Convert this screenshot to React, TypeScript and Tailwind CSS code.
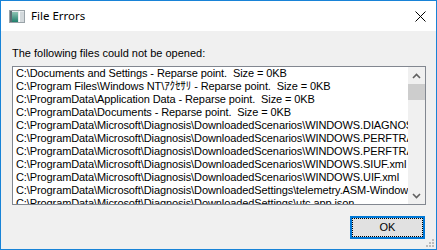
const rows = [
  "C:\\Documents and Settings - Reparse point.  Size = 0KB",
  "C:\\Program Files\\Windows NT\\ｱｸｾｻﾘ - Reparse point.  Size = 0KB",
  "C:\\ProgramData\\Application Data - Reparse point.  Size = 0KB",
  "C:\\ProgramData\\Documents - Reparse point.  Size = 0KB",
  "C:\\ProgramData\\Microsoft\\Diagnosis\\DownloadedScenarios\\WINDOWS.DIAGNOSTICS.xml",
  "C:\\ProgramData\\Microsoft\\Diagnosis\\DownloadedScenarios\\WINDOWS.PERFTRACK.xml",
  "C:\\ProgramData\\Microsoft\\Diagnosis\\DownloadedScenarios\\WINDOWS.PERFTRACK2.xml",
  "C:\\ProgramData\\Microsoft\\Diagnosis\\DownloadedScenarios\\WINDOWS.SIUF.xml",
  "C:\\ProgramData\\Microsoft\\Diagnosis\\DownloadedScenarios\\WINDOWS.UIF.xml",
  "C:\\ProgramData\\Microsoft\\Diagnosis\\DownloadedSettings\\telemetry.ASM-WindowsDefault.json",
  "C:\\ProgramData\\Microsoft\\Diagnosis\\DownloadedSettings\\utc.app.json",
];

function AppIcon() {
  return (
    <svg width="16" height="13" viewBox="0 0 16 13">
      <rect x="0.5" y="0.5" width="15" height="12" fill="#e8ecee" stroke="#9aa3a8" />
      <rect x="1" y="1" width="2" height="11" fill="#5d6d73" />
      <defs>
        <linearGradient id="g" x1="0" y1="0" x2="0" y2="1">
          <stop offset="0" stopColor="#8fc4b4" />
          <stop offset="1" stopColor="#1f7f6c" />
        </linearGradient>
      </defs>
      <rect x="3" y="2" width="6" height="10" fill="url(#g)" />
      <rect x="10" y="1" width="1" height="11" fill="#ffffff" />
      <rect x="11" y="2" width="4" height="10" fill="#d3d9dc" />
    </svg>
  );
}

function Chevron({ down }: { down?: boolean }) {
  return (
    <svg width="9" height="6" viewBox="0 0 9 6">
      <path
        d={down ? "M1 1 L4.5 4.5 L8 1" : "M1 5 L4.5 1.5 L8 5"}
        fill="none"
        stroke="#606060"
        strokeWidth="1.6"
      />
    </svg>
  );
}

function Grip() {
  const dots = [
    [6, 0],
    [3, 3],
    [6, 3],
    [0, 6],
    [3, 6],
    [6, 6],
  ];
  return (
    <svg width="8" height="8" viewBox="0 0 8 8">
      {dots.map(([x, y]) => (
        <rect key={`${x}-${y}`} x={x} y={y} width="2" height="2" fill="#bcbcbc" />
      ))}
    </svg>
  );
}

export default function App() {
  return (
    <div className="relative flex h-[250px] w-[437px] flex-col border border-[#1883d7] bg-[#f0f0f0] font-['Liberation_Sans','Noto_Sans_CJK_JP',sans-serif] text-[11px] text-black">
      {/* title bar */}
      <div className="flex h-[30px] items-center bg-white pl-2 pr-[10px]">
        <AppIcon />
        <span className="ml-[6px] font-['Noto_Sans',sans-serif] text-[11.5px] leading-none">File Errors</span>
        <svg className="ml-auto" width="11" height="11" viewBox="0 0 11 11">
          <path d="M0.5 0.5 L10.5 10.5 M10.5 0.5 L0.5 10.5" stroke="#000" strokeWidth="1" />
        </svg>
      </div>

      <div className="flex flex-1 flex-col px-[11px]">
        <div className="mt-4 leading-[13px]">The following files could not be opened:</div>

        <div className="mt-[6px] flex h-[139px] w-[414px] border border-[#828790] bg-white">
          <div className="min-w-0 flex-1 overflow-hidden tracking-[-0.1px]">
            {rows.map((r) => (
              <div key={r} className="h-[13px] whitespace-pre pl-[3px] leading-[13px]">
                {r}
              </div>
            ))}
          </div>
          <div className="flex w-[17px] flex-col bg-[#f0f0f0]">
            <div className="flex h-[17px] items-center justify-center">
              <Chevron />
            </div>
            <div className="h-[16px] bg-[#cdcdcd]" />
            <div className="flex-1" />
            <div className="flex h-[17px] items-center justify-center">
              <Chevron down />
            </div>
          </div>
        </div>

        <div className="mt-[11px] flex justify-end">
          <button className="h-[23px] w-[75px] border-2 border-[#0078d7] bg-[#e1e1e1] p-0">
            <div className="flex h-full w-full items-center justify-center border border-dotted border-black leading-none">
              OK
            </div>
          </button>
        </div>
      </div>

      <div className="absolute bottom-[2px] right-[2px] flex">
        <Grip />
      </div>
    </div>
  );
}
